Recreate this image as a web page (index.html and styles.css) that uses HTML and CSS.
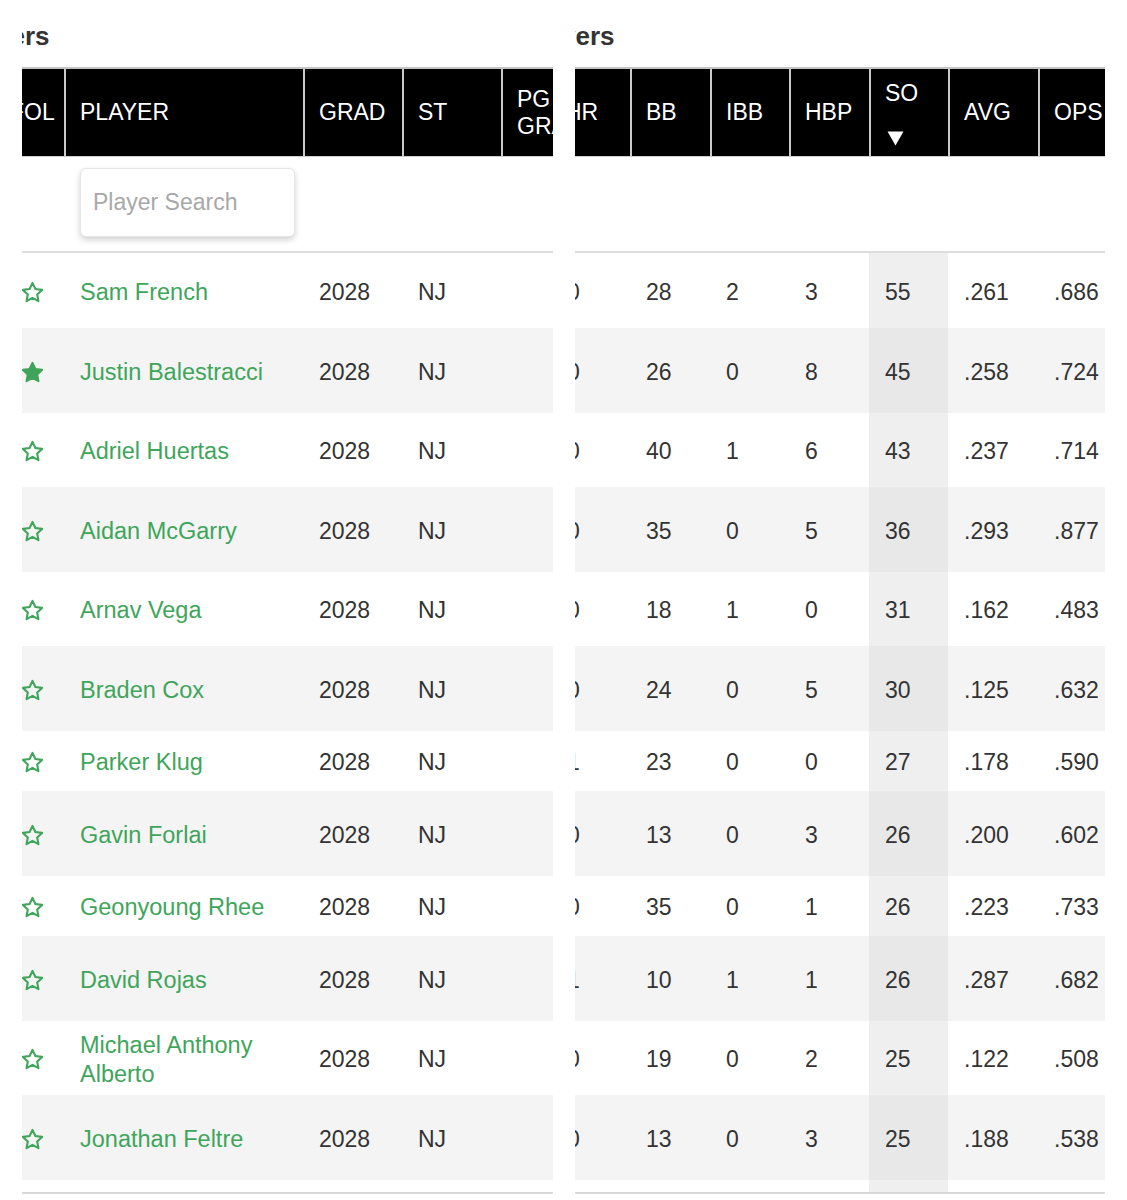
FILE: index.html
```html
<!DOCTYPE html>
<html lang="en">
<head>
<meta charset="utf-8">
<title>Players</title>
<link rel="stylesheet" href="styles.css">
</head>
<body>
<div class="page">
  <section class="panel">
    <h2 class="title"><span class="title-text title-left">Players</span></h2>
    <table class="grid grid-left">
      <colgroup><col class="c-fol"><col class="c-player"><col class="c-grad"><col class="c-st"><col class="c-pg"></colgroup>
      <thead>
        <tr class="head"><th>FOL</th><th>PLAYER</th><th>GRAD</th><th>ST</th><th class="two">PG<br>GRADE</th></tr>
      </thead>
      <tbody>
        <tr class="search"><td></td><td><input class="search-box" type="text" placeholder="Player Search"></td><td></td><td></td><td></td></tr>
        <tr class="r-a r-first"><td class="fav"><svg class="star" viewBox="0 0 24 24"><path d="M12 2.8l2.8 5.9 6.4.8-4.7 4.4 1.2 6.4L12 17.2l-5.7 3.1 1.2-6.4-4.7-4.4 6.4-.8z"/></svg></td><td class="name">Sam French</td><td>2028</td><td>NJ</td><td></td></tr>
        <tr class="r-t alt"><td class="fav"><svg class="star filled" viewBox="0 0 24 24"><path d="M12 2.8l2.8 5.9 6.4.8-4.7 4.4 1.2 6.4L12 17.2l-5.7 3.1 1.2-6.4-4.7-4.4 6.4-.8z"/></svg></td><td class="name">Justin Balestracci</td><td>2028</td><td>NJ</td><td></td></tr>
        <tr class="r-a"><td class="fav"><svg class="star" viewBox="0 0 24 24"><path d="M12 2.8l2.8 5.9 6.4.8-4.7 4.4 1.2 6.4L12 17.2l-5.7 3.1 1.2-6.4-4.7-4.4 6.4-.8z"/></svg></td><td class="name">Adriel Huertas</td><td>2028</td><td>NJ</td><td></td></tr>
        <tr class="r-t alt"><td class="fav"><svg class="star" viewBox="0 0 24 24"><path d="M12 2.8l2.8 5.9 6.4.8-4.7 4.4 1.2 6.4L12 17.2l-5.7 3.1 1.2-6.4-4.7-4.4 6.4-.8z"/></svg></td><td class="name">Aidan McGarry</td><td>2028</td><td>NJ</td><td></td></tr>
        <tr class="r-a"><td class="fav"><svg class="star" viewBox="0 0 24 24"><path d="M12 2.8l2.8 5.9 6.4.8-4.7 4.4 1.2 6.4L12 17.2l-5.7 3.1 1.2-6.4-4.7-4.4 6.4-.8z"/></svg></td><td class="name">Arnav Vega</td><td>2028</td><td>NJ</td><td></td></tr>
        <tr class="r-t alt"><td class="fav"><svg class="star" viewBox="0 0 24 24"><path d="M12 2.8l2.8 5.9 6.4.8-4.7 4.4 1.2 6.4L12 17.2l-5.7 3.1 1.2-6.4-4.7-4.4 6.4-.8z"/></svg></td><td class="name">Braden Cox</td><td>2028</td><td>NJ</td><td></td></tr>
        <tr class="r-s"><td class="fav"><svg class="star" viewBox="0 0 24 24"><path d="M12 2.8l2.8 5.9 6.4.8-4.7 4.4 1.2 6.4L12 17.2l-5.7 3.1 1.2-6.4-4.7-4.4 6.4-.8z"/></svg></td><td class="name">Parker Klug</td><td>2028</td><td>NJ</td><td></td></tr>
        <tr class="r-t alt"><td class="fav"><svg class="star" viewBox="0 0 24 24"><path d="M12 2.8l2.8 5.9 6.4.8-4.7 4.4 1.2 6.4L12 17.2l-5.7 3.1 1.2-6.4-4.7-4.4 6.4-.8z"/></svg></td><td class="name">Gavin Forlai</td><td>2028</td><td>NJ</td><td></td></tr>
        <tr class="r-s"><td class="fav"><svg class="star" viewBox="0 0 24 24"><path d="M12 2.8l2.8 5.9 6.4.8-4.7 4.4 1.2 6.4L12 17.2l-5.7 3.1 1.2-6.4-4.7-4.4 6.4-.8z"/></svg></td><td class="name">Geonyoung Rhee</td><td>2028</td><td>NJ</td><td></td></tr>
        <tr class="r-t alt"><td class="fav"><svg class="star" viewBox="0 0 24 24"><path d="M12 2.8l2.8 5.9 6.4.8-4.7 4.4 1.2 6.4L12 17.2l-5.7 3.1 1.2-6.4-4.7-4.4 6.4-.8z"/></svg></td><td class="name">David Rojas</td><td>2028</td><td>NJ</td><td></td></tr>
        <tr class="r-a"><td class="fav"><svg class="star" viewBox="0 0 24 24"><path d="M12 2.8l2.8 5.9 6.4.8-4.7 4.4 1.2 6.4L12 17.2l-5.7 3.1 1.2-6.4-4.7-4.4 6.4-.8z"/></svg></td><td class="name">Michael Anthony Alberto</td><td>2028</td><td>NJ</td><td></td></tr>
        <tr class="r-t alt"><td class="fav"><svg class="star" viewBox="0 0 24 24"><path d="M12 2.8l2.8 5.9 6.4.8-4.7 4.4 1.2 6.4L12 17.2l-5.7 3.1 1.2-6.4-4.7-4.4 6.4-.8z"/></svg></td><td class="name">Jonathan Feltre</td><td>2028</td><td>NJ</td><td></td></tr>
        <tr class="end"><td></td><td></td><td></td><td></td><td></td></tr>
      </tbody>
    </table>
  </section>

  <section class="panel">
    <h2 class="title"><span class="title-text title-right">Players</span></h2>
    <table class="grid grid-right">
      <colgroup><col class="c-hr"><col class="c-bb"><col class="c-ibb"><col class="c-hbp"><col class="c-so"><col class="c-avg"><col class="c-ops"></colgroup>
      <thead>
        <tr class="head"><th>HR</th><th>BB</th><th>IBB</th><th>HBP</th><th class="sorted"><div class="so-label">SO</div><svg class="sort-arrow" viewBox="0 0 17 15"><polygon points="0.5,0.5 16.5,0.5 8.5,14.5"/></svg></th><th>AVG</th><th>OPS</th></tr>
      </thead>
      <tbody>
        <tr class="search"><td></td><td></td><td></td><td></td><td></td><td></td><td></td></tr>
        <tr class="r-a r-first"><td class="hr">0</td><td>28</td><td>2</td><td>3</td><td class="so">55</td><td>.261</td><td>.686</td></tr>
        <tr class="r-t alt"><td class="hr">0</td><td>26</td><td>0</td><td>8</td><td class="so">45</td><td>.258</td><td>.724</td></tr>
        <tr class="r-a"><td class="hr">0</td><td>40</td><td>1</td><td>6</td><td class="so">43</td><td>.237</td><td>.714</td></tr>
        <tr class="r-t alt"><td class="hr">0</td><td>35</td><td>0</td><td>5</td><td class="so">36</td><td>.293</td><td>.877</td></tr>
        <tr class="r-a"><td class="hr">0</td><td>18</td><td>1</td><td>0</td><td class="so">31</td><td>.162</td><td>.483</td></tr>
        <tr class="r-t alt"><td class="hr">0</td><td>24</td><td>0</td><td>5</td><td class="so">30</td><td>.125</td><td>.632</td></tr>
        <tr class="r-s"><td class="hr">1</td><td>23</td><td>0</td><td>0</td><td class="so">27</td><td>.178</td><td>.590</td></tr>
        <tr class="r-t alt"><td class="hr">0</td><td>13</td><td>0</td><td>3</td><td class="so">26</td><td>.200</td><td>.602</td></tr>
        <tr class="r-s"><td class="hr">0</td><td>35</td><td>0</td><td>1</td><td class="so">26</td><td>.223</td><td>.733</td></tr>
        <tr class="r-t alt"><td class="hr">1</td><td>10</td><td>1</td><td>1</td><td class="so">26</td><td>.287</td><td>.682</td></tr>
        <tr class="r-a"><td class="hr">0</td><td>19</td><td>0</td><td>2</td><td class="so">25</td><td>.122</td><td>.508</td></tr>
        <tr class="r-t alt"><td class="hr">0</td><td>13</td><td>0</td><td>3</td><td class="so">25</td><td>.188</td><td>.538</td></tr>
        <tr class="end"><td></td><td></td><td></td><td></td><td class="so"></td><td></td><td></td></tr>
      </tbody>
    </table>
  </section>
</div>
</body>
</html>
```

FILE: styles.css
```css
* { box-sizing: border-box; }

html, body {
  margin: 0;
  padding: 0;
  background: #ffffff;
}

body {
  font-family: "Liberation Sans", Arial, Helvetica, sans-serif;
  color: #333333;
}

.page {
  display: flex;
  gap: 22px;
  padding-left: 22px;
}

.panel {
  overflow: hidden;
}

.panel:first-child { width: 531px; }
.panel:last-child { width: 530px; }

.title {
  margin: 0;
  height: 67px;
  padding-top: 21px;
  font-size: 26px;
  line-height: 30px;
  font-weight: bold;
  color: #333333;
  white-space: nowrap;
}

.title-left { margin-left: -65px; }
.title-right { margin-left: -53px; }

.grid {
  border-collapse: separate;
  border-spacing: 0;
  table-layout: fixed;
  font-size: 23px;
}

.grid-left { width: 607px; margin-left: -28px; }
.grid-right { width: 569px; margin-left: -26px; }

.c-fol { width: 70px; }
.c-player { width: 239px; }
.c-grad { width: 99px; }
.c-st { width: 99px; }
.c-pg { width: 100px; }

.c-hr { width: 81px; }
.c-bb { width: 80px; }
.c-ibb { width: 79px; }
.c-hbp { width: 80px; }
.c-so { width: 79px; }
.c-avg { width: 90px; }
.c-ops { width: 80px; }

.grid th {
  background: #000000;
  color: #ffffff;
  font-weight: normal;
  text-align: left;
  vertical-align: middle;
  padding: 0 6px 0 14px;
  border-left: 2px solid #c9c9c9;
  border-top: 2px solid #c4c4c4;
  border-bottom: 1px solid #cfcfcf;
  white-space: nowrap;
  line-height: 27px;
}

.grid th.sorted {
  vertical-align: top;
  padding-top: 10px;
}

.head { height: 90px; }

.grid td {
  padding: 3px 6px 0 14px;
  border-left: 2px solid transparent;
  vertical-align: middle;
  line-height: 27px;
  white-space: nowrap;
}

.grid td.hr { padding-left: 16px; }

.so-label { line-height: 28px; }

.sort-arrow {
  display: block;
  width: 17px;
  height: 15px;
  margin: 24px 0 0 2px;
  fill: #ffffff;
}

.search { height: 96px; }

.grid .search td {
  vertical-align: top;
  padding: 11px 0 0 0;
  border-left: none;
  border-bottom: 2px solid #dddddd;
}

.grid .search td:nth-child(2) { padding-left: 16px; }

.search-box {
  display: block;
  width: 215px;
  height: 69px;
  border: 1px solid #e6e6e6;
  border-radius: 6px;
  background: #ffffff;
  box-shadow: 0 3px 6px rgba(0, 0, 0, 0.18);
  padding: 0 12px;
  font-family: "Liberation Sans", Arial, Helvetica, sans-serif;
  font-size: 23px;
  color: #333333;
  outline: none;
}

.search-box::placeholder { color: #a8a8a8; }

.r-a { height: 74px; }
.r-first { height: 75px; }
.r-t { height: 85px; }
.r-s { height: 60px; }
.end { height: 14px; }

.grid .end td {
  padding: 0;
  border-left: none;
  border-bottom: 2px solid #d8d8d8;
}

.alt td { background: #f4f4f4; }

.grid td.so { background: #efefef; }
.alt td.so { background: #e8e8e8; }

.grid td.fav {
  padding-left: 24px;
  padding-right: 0;
}

.star {
  display: block;
  width: 25px;
  height: 25px;
  fill: none;
  stroke: #3fa55b;
  stroke-width: 2;
  stroke-linejoin: round;
}

.star.filled { fill: #3fa55b; }

.grid td.name {
  color: #3fa55b;
  font-size: 23.5px;
  line-height: 29px;
  white-space: normal;
}
```
